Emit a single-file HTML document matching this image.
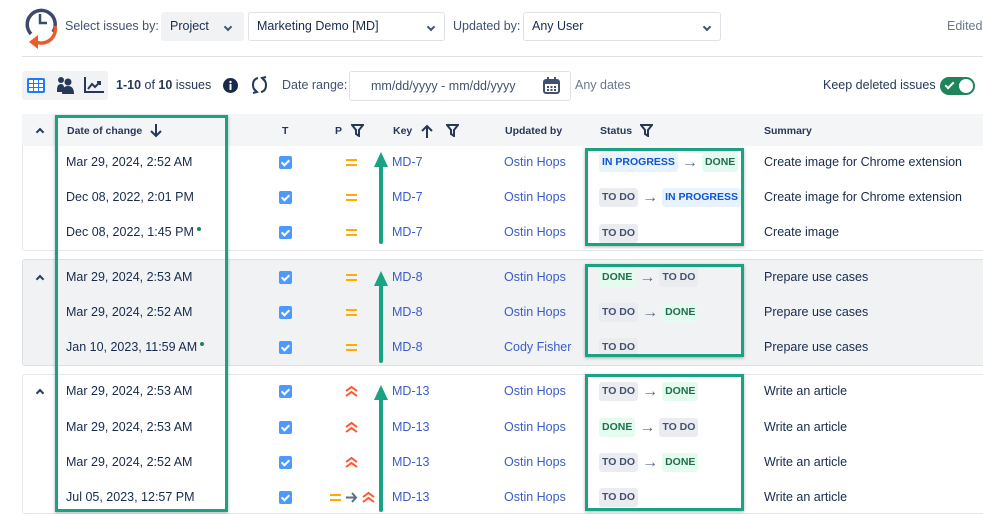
<!DOCTYPE html>
<html><head><meta charset="utf-8"><style>
*{margin:0;padding:0;box-sizing:border-box}
body{width:983px;height:512px;overflow:hidden;background:#fff;font-family:"Liberation Sans",Arial,sans-serif;color:#172b4d;font-size:12.5px;position:relative}
.a{position:absolute;white-space:nowrap}
.t{font-size:12.5px;color:#172b4d}
.l{color:#3b5cc9}
.h{font-size:10.5px;font-weight:bold;color:#253858}
.sel{position:absolute;border:1px solid #dfe1e6;border-radius:3px;height:29px;top:12px;background:#fff;font-size:12.5px;padding:0 8px;line-height:27px}
.chev{position:absolute;right:10px;top:11px;width:6px;height:6px;border-right:2px solid #42526e;border-bottom:2px solid #42526e;transform:rotate(45deg)}
.lz{font-size:10.5px;font-weight:bold;padding:3px 3px;border-radius:3px;display:inline-block;line-height:13px;vertical-align:middle}
.td{background:#ebecf0;color:#42526e}
.dn{background:#e3fcef;color:#216e4e}
.ip{background:#e9f2ff;color:#0c55cf}
.ar{color:#5e6c84;margin:0 4px;font-size:16px;vertical-align:middle;line-height:13px}
.cb{position:absolute;width:13px;height:13px;background:#4c9aff;border-radius:2px}
.cb:after{content:"";position:absolute;left:4px;top:2px;width:3px;height:6px;border-right:2px solid #fff;border-bottom:2px solid #fff;transform:rotate(45deg)}
.eq{position:absolute;width:11px;height:7px;border-top:2px solid #ffab00;border-bottom:2px solid #ffab00}
.box{position:absolute;border:3px solid #1aa382;box-shadow:0 1px 3px rgba(0,0,0,.3)}
.up{position:absolute;width:0;height:0;border-left:7px solid transparent;border-right:7px solid transparent;border-bottom:15px solid #1aa382}
.shaft{position:absolute;width:4px;background:#1aa382;border-radius:2px}
.ca{position:absolute;width:6px;height:6px;border-left:2px solid #253858;border-top:2px solid #253858;transform:rotate(45deg)}
.dot{display:inline-block;width:4px;height:4px;border-radius:50%;background:#1f845a;vertical-align:top;margin-left:3px;margin-top:2px}
</style></head><body>

<svg class="a" style="left:22px;top:4px" width="38" height="46" viewBox="0 0 38 46">
<path d="M9 30 A14 14 0 1 1 31 28" fill="none" stroke="#3d4a6b" stroke-width="3.5"/>
<path d="M18 10 V19 H25" fill="none" stroke="#3d4a6b" stroke-width="2.5"/>
<path d="M33 22 A14 14 0 0 1 14 38" fill="none" stroke="#f05a28" stroke-width="3.5"/>
<path d="M7 38 L16 31 L16 45 Z" fill="#f05a28"/>
</svg>
<div class="a t" style="left:65px;top:19px;color:#42526e">Select issues by:</div>
<div class="sel" style="left:161px;width:83px;background:#f1f2f4;border-color:#f1f2f4">Project<span class="chev" style="right:12px"></span></div>
<div class="sel" style="left:248px;width:197px">Marketing Demo [MD]<span class="chev"></span></div>
<div class="a t" style="left:453px;top:19px;color:#42526e">Updated by:</div>
<div class="sel" style="left:523px;width:198px">Any User<span class="chev"></span></div>
<div class="a t" style="left:947px;top:19px;color:#6b778c">Edited</div>
<div class="a" style="left:22px;top:56px;width:961px;height:1px;background:#dfe1e6"></div>

<div class="a" style="left:22px;top:71px;width:86px;height:29px;background:#f1f2f4;border-radius:3px"></div>
<svg class="a" style="left:27px;top:78px" width="18" height="15" viewBox="0 0 18 15"><rect x="0" y="0" width="18" height="15" rx="2" fill="#1d7afc"/><g fill="#fff"><rect x="2" y="2" width="4" height="3"/><rect x="7" y="2" width="4" height="3"/><rect x="12" y="2" width="4" height="3"/><rect x="2" y="6" width="4" height="3"/><rect x="7" y="6" width="4" height="3"/><rect x="12" y="6" width="4" height="3"/><rect x="2" y="10" width="4" height="3"/><rect x="7" y="10" width="4" height="3"/><rect x="12" y="10" width="4" height="3"/></g></svg>
<svg class="a" style="left:56px;top:76px" width="18" height="18" viewBox="0 0 18 18" fill="#253858"><circle cx="5" cy="4" r="3"/><circle cx="12" cy="6" r="3.5"/><path d="M1 14 Q1 8 5 8 Q8 8 8 12 V16 H1Z"/><path d="M6 18 Q6 10 12 10 Q18 10 18 18Z"/></svg>
<svg class="a" style="left:84px;top:77px" width="20" height="17" viewBox="0 0 20 17" fill="none" stroke="#253858" stroke-width="2"><path d="M1 0 V15 H20"/><path d="M4 12 L8 7 L11 10 L16 5"/><path d="M13 5 H16 V8"/></svg>
<div class="a t" style="left:116px;top:78px;color:#253858"><b>1-10</b> of <b>10</b> issues</div>
<svg class="a" style="left:223px;top:78px" width="15" height="15" viewBox="0 0 15 15"><circle cx="7.5" cy="7.5" r="7.5" fill="#172b4d"/><rect x="6.5" y="6" width="2" height="6" fill="#fff"/><circle cx="7.5" cy="4" r="1.2" fill="#fff"/></svg>
<svg class="a" style="left:251px;top:76px" width="17" height="18" viewBox="0 0 17 18" fill="none" stroke="#253858" stroke-width="2"><path d="M7 2 Q2 3 2 9 Q2 13 5 15"/><path d="M10 16 Q15 15 15 9 Q15 5 12 3"/><path d="M3 13 L6 16 L2 17"/><path d="M14 5 L11 2 L15 1"/></svg>
<div class="a t" style="left:282px;top:78px;color:#42526e">Date range:</div>
<div class="sel" style="left:349px;top:71px;width:222px;height:30px;line-height:28px;padding-left:21px;color:#42526e">mm/dd/yyyy - mm/dd/yyyy</div>
<svg class="a" style="left:543px;top:77px" width="17" height="17" viewBox="0 0 17 17"><rect x="1" y="3" width="15" height="13" rx="2" fill="none" stroke="#42526e" stroke-width="2"/><rect x="1" y="3" width="15" height="4" fill="#42526e"/><rect x="4" y="0" width="2" height="4" fill="#42526e"/><rect x="11" y="0" width="2" height="4" fill="#42526e"/><g fill="#42526e"><rect x="4" y="9" width="2" height="2"/><rect x="7.5" y="9" width="2" height="2"/><rect x="11" y="9" width="2" height="2"/><rect x="4" y="12" width="2" height="2"/><rect x="7.5" y="12" width="2" height="2"/><rect x="11" y="12" width="2" height="2"/></g></svg>
<div class="a t" style="left:575px;top:78px;color:#6b778c">Any dates</div>
<div class="a t" style="left:823px;top:78px;color:#253858">Keep deleted issues</div>
<div class="a" style="left:940px;top:77px;width:35px;height:18px;border-radius:9px;background:#1f845a"></div>
<div class="a" style="left:959px;top:79px;width:14px;height:14px;border-radius:50%;background:#fff"></div>
<div class="a" style="left:947px;top:80px;width:5px;height:9px;border-right:2px solid #fff;border-bottom:2px solid #fff;transform:rotate(45deg)"></div>

<div class="a" style="left:22px;top:114px;width:961px;height:32px;background:#f4f5f7"></div>
<div class="ca" style="left:37px;top:129px"></div>
<div class="a h" style="left:67px;top:125px">Date of change</div>
<svg class="a" style="left:150px;top:124px" width="12" height="14" viewBox="0 0 12 14" fill="none" stroke="#253858" stroke-width="2"><path d="M6 0 V12 M1 7 L6 12 L11 7"/></svg>
<div class="a h" style="left:282px;top:125px">T</div>
<div class="a h" style="left:335px;top:125px">P</div>
<svg class="a" style="left:351px;top:124px" width="13" height="13" viewBox="0 0 13 13" fill="none" stroke="#253858" stroke-width="2"><path d="M1 1 H12 L8 6 V12 L5 10 V6 Z"/></svg>
<div class="a h" style="left:393px;top:125px">Key</div>
<svg class="a" style="left:421px;top:124px" width="12" height="14" viewBox="0 0 12 14" fill="none" stroke="#253858" stroke-width="2"><path d="M6 14 V2 M1 7 L6 2 L11 7"/></svg>
<svg class="a" style="left:446px;top:124px" width="13" height="13" viewBox="0 0 13 13" fill="none" stroke="#253858" stroke-width="2"><path d="M1 1 H12 L8 6 V12 L5 10 V6 Z"/></svg>
<div class="a h" style="left:505px;top:125px">Updated by</div>
<div class="a h" style="left:600px;top:125px">Status</div>
<svg class="a" style="left:640px;top:124px" width="13" height="13" viewBox="0 0 13 13" fill="none" stroke="#253858" stroke-width="2"><path d="M1 1 H12 L8 6 V12 L5 10 V6 Z"/></svg>
<div class="a h" style="left:764px;top:125px">Summary</div>

<div class="a" style="left:22px;top:146px;width:980px;height:105px;border:1px solid #e4e6ea;border-top:none;border-radius:0 0 3px 3px"></div>
<div class="a" style="left:22px;top:259px;width:980px;height:107px;background:#f1f2f4;border:1px solid #dcdfe4;border-radius:3px"></div>
<div class="a" style="left:22px;top:374px;width:980px;height:140px;border:1px solid #e4e6ea;border-radius:3px"></div>
<div class="ca" style="left:37px;top:276px"></div>
<div class="ca" style="left:37px;top:390px"></div>

<div class="a t" style="left:66px;top:155px">Mar 29, 2024, 2:52 AM</div>
<div class="a t" style="left:66px;top:190px">Dec 08, 2022, 2:01 PM</div>
<div class="a t" style="left:66px;top:225px">Dec 08, 2022, 1:45 PM<span class="dot"></span></div>
<div class="a t" style="left:66px;top:270px">Mar 29, 2024, 2:53 AM</div>
<div class="a t" style="left:66px;top:305px">Mar 29, 2024, 2:52 AM</div>
<div class="a t" style="left:66px;top:340px">Jan 10, 2023, 11:59 AM<span class="dot"></span></div>
<div class="a t" style="left:66px;top:384px">Mar 29, 2024, 2:53 AM</div>
<div class="a t" style="left:66px;top:420px">Mar 29, 2024, 2:53 AM</div>
<div class="a t" style="left:66px;top:455px">Mar 29, 2024, 2:52 AM</div>
<div class="a t" style="left:66px;top:490px">Jul 05, 2023, 12:57 PM</div>

<div class="cb" style="left:279px;top:156px"></div><div class="cb" style="left:279px;top:191px"></div><div class="cb" style="left:279px;top:226px"></div>
<div class="cb" style="left:279px;top:271px"></div><div class="cb" style="left:279px;top:306px"></div><div class="cb" style="left:279px;top:341px"></div>
<div class="cb" style="left:279px;top:385px"></div><div class="cb" style="left:279px;top:421px"></div><div class="cb" style="left:279px;top:456px"></div><div class="cb" style="left:279px;top:491px"></div>

<div class="eq" style="left:346px;top:159px"></div><div class="eq" style="left:346px;top:194px"></div><div class="eq" style="left:346px;top:229px"></div>
<div class="eq" style="left:346px;top:274px"></div><div class="eq" style="left:346px;top:309px"></div><div class="eq" style="left:346px;top:344px"></div>
<svg class="a" style="left:345px;top:385px" width="13" height="12" viewBox="0 0 13 12" fill="none" stroke="#ff5630" stroke-width="2"><path d="M1 6 L6.5 2 L12 6 M1 11 L6.5 7 L12 11"/></svg>
<svg class="a" style="left:345px;top:421px" width="13" height="12" viewBox="0 0 13 12" fill="none" stroke="#ff5630" stroke-width="2"><path d="M1 6 L6.5 2 L12 6 M1 11 L6.5 7 L12 11"/></svg>
<svg class="a" style="left:345px;top:456px" width="13" height="12" viewBox="0 0 13 12" fill="none" stroke="#ff5630" stroke-width="2"><path d="M1 6 L6.5 2 L12 6 M1 11 L6.5 7 L12 11"/></svg>
<div class="eq" style="left:330px;top:494px"></div>
<svg class="a" style="left:346px;top:492px" width="12" height="11" viewBox="0 0 12 11" fill="none" stroke="#5e6c84" stroke-width="2"><path d="M0 5.5 H10 M6 1 L10 5.5 L6 10"/></svg>
<svg class="a" style="left:362px;top:491px" width="13" height="12" viewBox="0 0 13 12" fill="none" stroke="#ff5630" stroke-width="2"><path d="M1 6 L6.5 2 L12 6 M1 11 L6.5 7 L12 11"/></svg>

<div class="a t l" style="left:392px;top:155px">MD-7</div><div class="a t l" style="left:392px;top:190px">MD-7</div><div class="a t l" style="left:392px;top:225px">MD-7</div>
<div class="a t l" style="left:392px;top:270px">MD-8</div><div class="a t l" style="left:392px;top:305px">MD-8</div><div class="a t l" style="left:392px;top:340px">MD-8</div>
<div class="a t l" style="left:392px;top:384px">MD-13</div><div class="a t l" style="left:392px;top:420px">MD-13</div><div class="a t l" style="left:392px;top:455px">MD-13</div><div class="a t l" style="left:392px;top:490px">MD-13</div>

<div class="a t l" style="left:504px;top:155px">Ostin Hops</div><div class="a t l" style="left:504px;top:190px">Ostin Hops</div><div class="a t l" style="left:504px;top:225px">Ostin Hops</div>
<div class="a t l" style="left:504px;top:270px">Ostin Hops</div><div class="a t l" style="left:504px;top:305px">Ostin Hops</div><div class="a t l" style="left:504px;top:340px">Cody Fisher</div>
<div class="a t l" style="left:504px;top:384px">Ostin Hops</div><div class="a t l" style="left:504px;top:420px">Ostin Hops</div><div class="a t l" style="left:504px;top:455px">Ostin Hops</div><div class="a t l" style="left:504px;top:490px">Ostin Hops</div>

<div class="a" style="left:599px;top:153px"><span class="lz ip">IN PROGRESS</span><span class="ar">→</span><span class="lz dn">DONE</span></div>
<div class="a" style="left:599px;top:188px"><span class="lz td">TO DO</span><span class="ar">→</span><span class="lz ip">IN PROGRESS</span></div>
<div class="a" style="left:599px;top:224px"><span class="lz td">TO DO</span></div>
<div class="a" style="left:599px;top:268px"><span class="lz dn">DONE</span><span class="ar">→</span><span class="lz td">TO DO</span></div>
<div class="a" style="left:599px;top:303px"><span class="lz td">TO DO</span><span class="ar">→</span><span class="lz dn">DONE</span></div>
<div class="a" style="left:599px;top:338px"><span class="lz td">TO DO</span></div>
<div class="a" style="left:599px;top:382px"><span class="lz td">TO DO</span><span class="ar">→</span><span class="lz dn">DONE</span></div>
<div class="a" style="left:599px;top:418px"><span class="lz dn">DONE</span><span class="ar">→</span><span class="lz td">TO DO</span></div>
<div class="a" style="left:599px;top:453px"><span class="lz td">TO DO</span><span class="ar">→</span><span class="lz dn">DONE</span></div>
<div class="a" style="left:599px;top:488px"><span class="lz td">TO DO</span></div>

<div class="a t" style="left:764px;top:155px">Create image for Chrome extension</div>
<div class="a t" style="left:764px;top:190px">Create image for Chrome extension</div>
<div class="a t" style="left:764px;top:225px">Create image</div>
<div class="a t" style="left:764px;top:270px">Prepare use cases</div>
<div class="a t" style="left:764px;top:305px">Prepare use cases</div>
<div class="a t" style="left:764px;top:340px">Prepare use cases</div>
<div class="a t" style="left:764px;top:384px">Write an article</div>
<div class="a t" style="left:764px;top:420px">Write an article</div>
<div class="a t" style="left:764px;top:455px">Write an article</div>
<div class="a t" style="left:764px;top:490px">Write an article</div>

<div class="box" style="left:55px;top:115px;width:173px;height:397px"></div>
<div class="box" style="left:585px;top:148px;width:159px;height:98px"></div>
<div class="box" style="left:585px;top:264px;width:159px;height:93px"></div>
<div class="box" style="left:585px;top:374px;width:159px;height:137px"></div>
<div class="up" style="left:374px;top:152px"></div><div class="shaft" style="left:379px;top:164px;height:80px"></div>
<div class="up" style="left:374px;top:271px"></div><div class="shaft" style="left:379px;top:283px;height:80px"></div>
<div class="up" style="left:374px;top:385px"></div><div class="shaft" style="left:379px;top:397px;height:115px"></div>
</body></html>
